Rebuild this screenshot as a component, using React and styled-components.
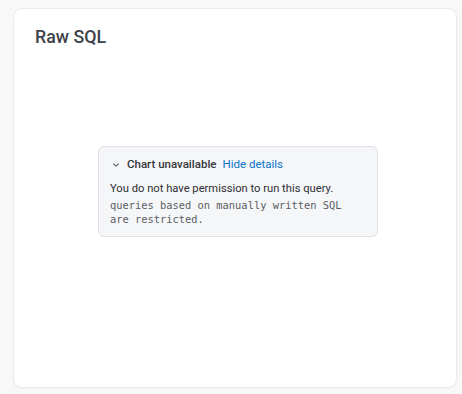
import React from "react";
import styled, { createGlobalStyle } from "styled-components";

const Global = createGlobalStyle`
  html, body { margin: 0; padding: 0; background: #f8f8f9; }
  body { font-family: Roboto, "Liberation Sans", Arial, sans-serif; -webkit-font-smoothing: antialiased; }
  #root { padding: 8px 5px 6px 13px; }
`;

const Card = styled.section`
  box-sizing: border-box;
  width: 444px;
  height: 380px;
  background: #fff;
  border: 1px solid #ebebed;
  border-radius: 9px;
  box-shadow: 0 1px 2px rgba(0, 0, 0, 0.03);
  display: flex;
  flex-direction: column;
  padding: 17px 21px 56px;
`;

const Title = styled.h2`
  margin: 0;
  font-size: 17.8px;
  line-height: 22px;
  font-weight: 500;
  color: #3d414a;
`;

const Body = styled.div`
  flex: 1;
  display: flex;
  align-items: center;
  justify-content: center;
  padding-left: 6px;
  padding-top: 4px;
`;

const Notice = styled.div`
  box-sizing: border-box;
  width: 280px;
  height: 91px;
  background: #f5f6f8;
  border: 1px solid #dfe1e6;
  border-radius: 6px;
  padding: 10px 11px;
  color: #2e3036;
`;

const Summary = styled.div`
  display: flex;
  align-items: center;
  font-size: 11.5px;
  line-height: 15px;
  margin-left: 2px;
`;

const Chevron = styled.svg`
  width: 8px;
  height: 8px;
  margin-right: 7px;
  color: #5c5f66;
`;

const Strong = styled.span`
  font-weight: 500;
  color: #33363c;
`;

const Link = styled.a`
  color: #0b74c9;
  margin-left: 6px;
  cursor: pointer;
`;

const Message = styled.p`
  margin: 9px 0 0;
  font-size: 11.2px;
  line-height: 15px;
  color: #2d2f34;
`;

const Code = styled.pre`
  margin: 2px 0 0;
  font-family: "DejaVu Sans Mono", "Liberation Mono", monospace;
  font-size: 10.4px;
  line-height: 14px;
  color: #5a5d64;
  white-space: pre-wrap;
`;

export default function App() {
  return (
    <>
      <Global />
      <Card>
        <Title>Raw SQL</Title>
        <Body>
          <Notice>
            <Summary>
              <Chevron viewBox="0 0 8 8" fill="none">
                <path d="M1.5 2.8 L4 5.2 L6.5 2.8" stroke="currentColor" strokeWidth="1.1" strokeLinecap="round" strokeLinejoin="round" />
              </Chevron>
              <Strong>Chart unavailable</Strong>
              <Link>Hide details</Link>
            </Summary>
            <Message>You do not have permission to run this query.</Message>
            <Code>{"queries based on manually written SQL\nare restricted."}</Code>
          </Notice>
        </Body>
      </Card>
    </>
  );
}
